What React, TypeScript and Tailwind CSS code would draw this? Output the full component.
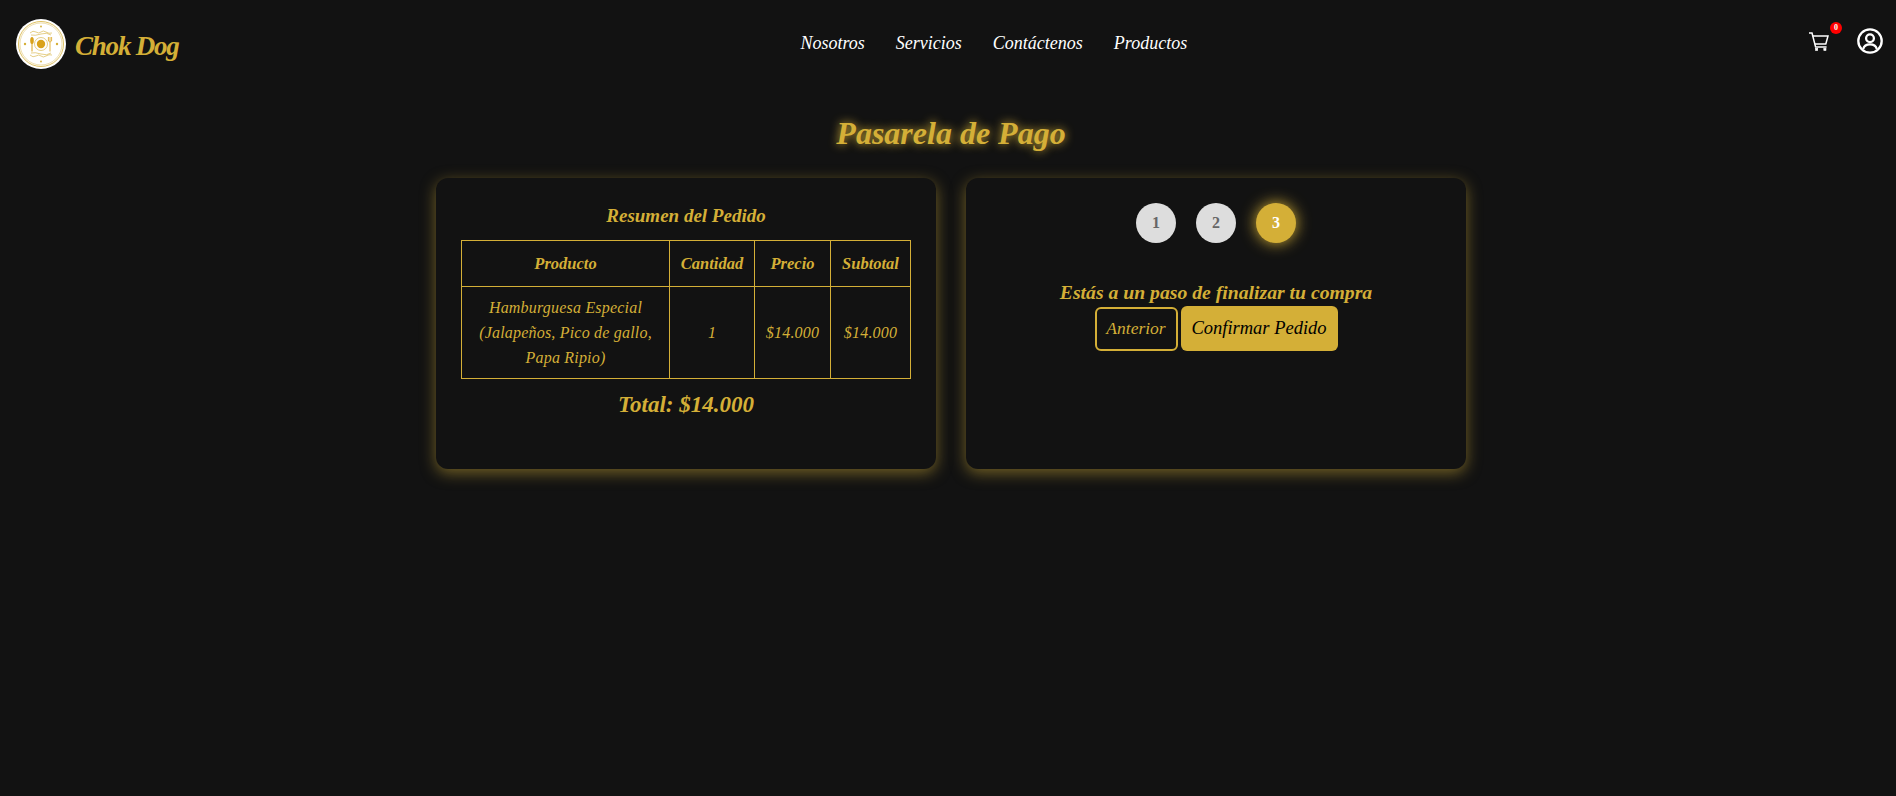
import React from 'react';

const gold = '#d4af37';

function Logo() {
    return (
        <svg width="50" height="50" viewBox="0 0 50 50" className="shrink-0">
            <circle cx="25" cy="25" r="25" fill="#ffffff" />
            <circle cx="25" cy="25" r="22.5" fill="none" stroke={gold} strokeWidth="0.8" />
            <circle cx="25" cy="25" r="21" fill="none" stroke={gold} strokeWidth="0.4" />
            {/* plate */}
            <circle cx="25" cy="25" r="6.5" fill="none" stroke={gold} strokeWidth="0.6" />
            <circle cx="25" cy="25" r="4.2" fill="#d9a21b" />
            {/* spoon */}
            <ellipse cx="16" cy="21.5" rx="1.8" ry="3.5" fill="#d9a21b" />
            <path d="M16 24v8.5" stroke="#d9a21b" strokeWidth="1" />
            {/* fork */}
            <path d="M32.4 18v4M34 18v4M35.6 18v4M32.4 22q1.6 2 3.2 0M34 23v9.5" stroke="#d9a21b" strokeWidth="0.8" fill="none" />
            {/* ornaments */}
            <path d="M14 14q3-3 6-1t5 0 5 0 6 1M15 16q4 1 10-1t10 1" stroke={gold} strokeWidth="0.6" fill="none" />
            <path d="M14 36q3 3 6 1t5 0 5 0 6-1M15 34q4-1 10 1t10-1" stroke={gold} strokeWidth="0.6" fill="none" />
            <circle cx="25" cy="7.5" r="0.9" fill={gold} />
            <circle cx="25" cy="42.5" r="0.9" fill={gold} />
            <circle cx="9" cy="25" r="1.2" fill={gold} />
            <circle cx="41" cy="25" r="1.2" fill={gold} />
        </svg>
    );
}

function CartIcon() {
    return (
        <svg width="20" height="19" viewBox="0 0 20 19" fill="none" stroke="#ffffff" strokeWidth="1.5">
            <path d="M0 1h3l3.6 14h11" />
            <path d="M3.8 4h15.2l-2.2 8H5.8" />
            <rect x="6.5" y="16.3" width="2.2" height="2.2" fill="#ffffff" strokeWidth="0.6" />
            <rect x="14.8" y="16.3" width="2.2" height="2.2" fill="#ffffff" strokeWidth="0.6" />
        </svg>
    );
}

function UserIcon() {
    return (
        <svg width="26" height="26" viewBox="0 0 26 26" fill="none" stroke="#ffffff" strokeWidth="2.3">
            <circle cx="13" cy="13" r="11.7" />
            <circle cx="13" cy="10.3" r="3.9" />
            <path d="M6.2 21c1-3.6 4-4.6 6.8-4.6s5.8 1 6.8 4.6" />
        </svg>
    );
}

function StepDot({ n, active }: { n: number; active?: boolean }) {
    return (
        <div
            className={
                active
                    ? 'w-10 h-10 rounded-full flex items-center justify-center font-bold text-white bg-[#d4af37] shadow-[0_0_15px_#d4af37]'
                    : 'w-10 h-10 rounded-full flex items-center justify-center font-bold text-[#666] bg-[#ddd]'
            }
        >
            {n}
        </div>
    );
}

const thClass = 'border border-[#d4af37] font-bold italic px-1 py-[10px] text-center text-[16.5px] leading-[25px]';
const tdClass = 'border border-[#d4af37] italic px-1 py-2 text-center text-[16px] leading-[25px] tracking-[0.2px]';
const cardClass = 'w-[500px] h-[291px] rounded-xl bg-[#121212] shadow-[0_4px_15px_rgba(212,175,55,0.5)]';

export default function App() {
    return (
        <div className="min-h-[796px] bg-[#121212] text-[#d4af37] font-['Liberation_Serif',serif]">
            {/* HEADER */}
            <header className="flex items-center justify-between pl-4 pr-[13px] h-[86px]">
                <div className="flex items-center gap-[9px] mt-[2px]">
                    <Logo />
                    <span className="text-[27px] font-bold italic leading-none tracking-[-1.2px] mt-[4px]">Chok Dog</span>
                </div>
                <nav className="flex items-center gap-[31px] text-white italic text-[18px] mt-[1px]">
                    <span>Nosotros</span>
                    <span>Servicios</span>
                    <span>Contáctenos</span>
                    <span>Productos</span>
                </nav>
                <div className="flex items-center gap-[28px] text-white -mt-[4px]">
                    <div className="relative">
                        <CartIcon />
                        <span className="absolute -top-[10px] -right-[13px] w-3 h-3 rounded-full bg-[#f00] text-white text-[8px] font-bold flex items-center justify-center">
                            0
                        </span>
                    </div>
                    <UserIcon />
                </div>
            </header>

            <div className="pl-[6px]">
                {/* TITLE */}
                <h1 className="text-center text-[32px] leading-[48px] font-bold italic mt-[23px] [text-shadow:0_0_10px_#d4af37]">
                    Pasarela de Pago
                </h1>

                {/* CARDS */}
                <main className="flex justify-center gap-[30px] mt-[21px]">
                    <section className={cardClass + ' px-[25px]'}>
                        <h2 className="text-center text-[19px] font-bold italic leading-[28px] mt-6 mb-[10px]">Resumen del Pedido</h2>
                        <table className="w-full border-collapse table-fixed">
                            <thead>
                                <tr>
                                    <th className={thClass + ' w-[208px]'}>Producto</th>
                                    <th className={thClass + ' w-[85px]'}>Cantidad</th>
                                    <th className={thClass + ' w-[76px]'}>Precio</th>
                                    <th className={thClass}>Subtotal</th>
                                </tr>
                            </thead>
                            <tbody>
                                <tr>
                                    <td className={tdClass + ' px-3'}>
                                        Hamburguesa Especial (Jalapeños, Pico de gallo, Papa Ripio)
                                    </td>
                                    <td className={tdClass}>1</td>
                                    <td className={tdClass + ' px-0'}>$14.000</td>
                                    <td className={tdClass + ' px-0'}>$14.000</td>
                                </tr>
                            </tbody>
                        </table>
                        <p className="text-center text-[23px] font-bold italic leading-[32px] mt-[10px]">Total: $14.000</p>
                    </section>

                    <section className={cardClass + ' flex flex-col items-center'}>
                        <div className="flex gap-5 mt-[25px]">
                            <StepDot n={1} />
                            <StepDot n={2} />
                            <StepDot n={3} active />
                        </div>
                        <h3 className="text-[19.7px] font-bold italic leading-[28px] mt-[35px]">Estás a un paso de finalizar tu compra</h3>
                        <div className="flex items-center gap-[3px]">
                            <button className="w-[83px] h-[44px] rounded-[6px] border-2 border-[#d4af37] italic text-[17.5px]">Anterior</button>
                            <button className="w-[157px] h-[45px] rounded-[6px] bg-[#d4af37] text-black italic text-[18.5px]">Confirmar Pedido</button>
                        </div>
                    </section>
                </main>
            </div>
        </div>
    );
}
